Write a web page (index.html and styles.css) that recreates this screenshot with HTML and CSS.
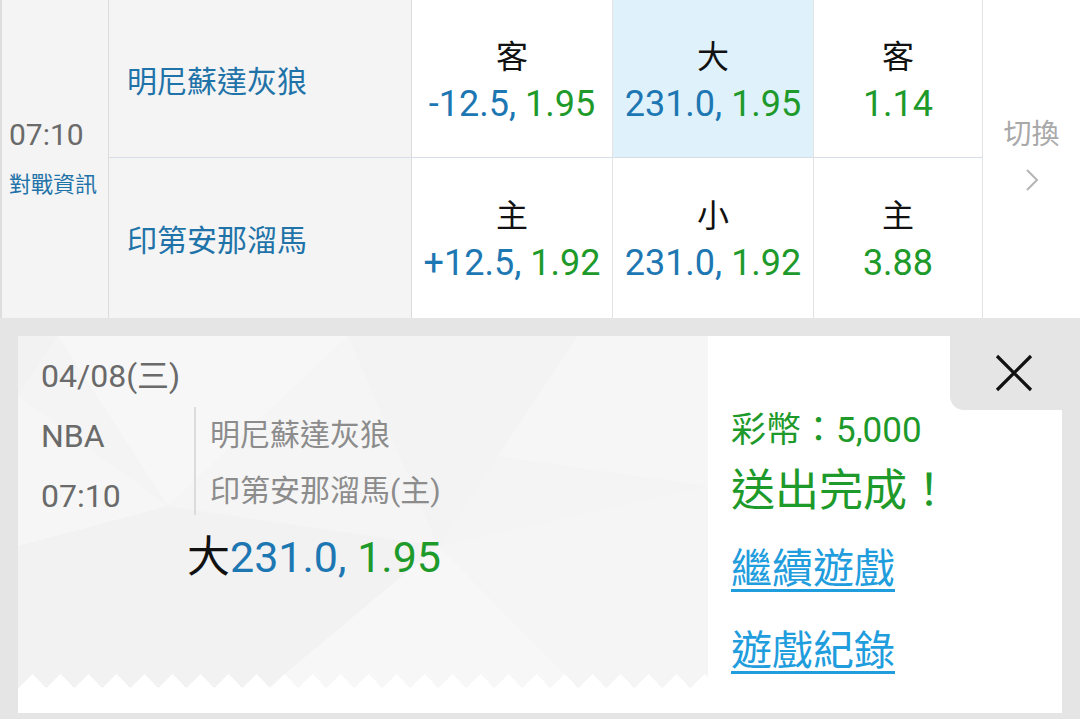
FILE: index.html
```html
<!DOCTYPE html>
<html lang="zh-Hant">
<head>
<meta charset="utf-8">
<title>投注</title>
<link rel="stylesheet" href="styles.css">
</head>
<body>
<div class="board">
  <div class="cell time-cell">
    <div class="time">07:10</div>
    <div class="info">對戰資訊</div>
  </div>
  <div class="cell team row1">明尼蘇達灰狼</div>
  <div class="cell odds row1">
    <div class="label">客</div>
    <div class="val"><span class="blue">-12.5,</span> <span class="green">1.95</span></div>
  </div>
  <div class="cell odds row1 selected">
    <div class="label">大</div>
    <div class="val"><span class="blue">231.0,</span> <span class="green">1.95</span></div>
  </div>
  <div class="cell odds row1">
    <div class="label">客</div>
    <div class="val"><span class="green">1.14</span></div>
  </div>
  <div class="cell switch-cell">
    <div class="switch">切換</div>
    <svg class="chev" width="14" height="24" viewBox="0 0 14 24"><polyline points="2,2 12,12 2,22" fill="none" stroke="#b5b5b5" stroke-width="2"/></svg>
  </div>
  <div class="cell team">印第安那溜馬</div>
  <div class="cell odds">
    <div class="label">主</div>
    <div class="val"><span class="blue">+12.5,</span> <span class="green">1.92</span></div>
  </div>
  <div class="cell odds">
    <div class="label">小</div>
    <div class="val"><span class="blue">231.0,</span> <span class="green">1.92</span></div>
  </div>
  <div class="cell odds">
    <div class="label">主</div>
    <div class="val"><span class="green">3.88</span></div>
  </div>
</div>

<div class="sheet">
  <div class="card">
    <div class="ticket">
      <svg class="facets" viewBox="0 0 690 352" preserveAspectRatio="none">
        <rect x="0" y="0" width="690" height="352" fill="#f4f4f4"/>
        <polygon points="40,0 330,0 150,170" fill="#f7f7f7"/>
        <polygon points="0,0 40,0 0,60" fill="#f2f2f2"/>
        <polygon points="330,0 560,0 420,210" fill="#f3f3f3"/>
        <polygon points="560,0 690,0 690,150 480,120" fill="#f6f6f6"/>
        <polygon points="150,170 420,210 250,352 0,352 0,210" fill="#f2f2f2"/>
        <polygon points="420,210 690,150 690,352 560,352" fill="#f5f5f5"/>
        <polygon points="250,352 420,210 560,352" fill="#f7f7f7"/>
        <polygon points="0,60 150,170 0,210" fill="#f6f6f6"/>
        <polygon points="330,0 420,210 150,170" fill="#f5f5f5"/>
      </svg>
      <div class="ticket-body">
        <div class="date">04/08(三)</div>
        <div class="match">
          <div class="meta">
            <div>NBA</div>
            <div>07:10</div>
          </div>
          <div class="teams">
            <div>明尼蘇達灰狼</div>
            <div>印第安那溜馬(主)</div>
          </div>
        </div>
        <div class="pick"><span class="dark">大</span><span class="blue">231.0,</span> <span class="green">1.95</span></div>
      </div>
      <div class="zigzag"></div>
    </div>
    <div class="panel">
      <div class="panel-head">
        <div class="close">
          <svg width="38" height="38" viewBox="0 0 38 38"><path d="M2 2 L36 36 M36 2 L2 36" stroke="#111" stroke-width="3.2" fill="none"/></svg>
        </div>
      </div>
      <div class="panel-body">
        <div class="coins">彩幣：5,000</div>
        <div class="done">送出完成！</div>
        <a class="link first">繼續遊戲</a>
        <a class="link second">遊戲紀錄</a>
      </div>
    </div>
  </div>
</div>
</body>
</html>
```
FILE: styles.css
```css
html, body {
  margin: 0;
  padding: 0;
  background: #e5e5e5;
  font-family: Roboto, "Noto Sans CJK TC", sans-serif;
}

.board {
  display: grid;
  grid-template-columns: 107px 303px 201px 201px 169px 1fr;
  grid-template-rows: 158px 160px;
  border-left: 2px solid #dedede;
  background: #fff;
}

.cell {
  box-sizing: border-box;
  border-right: 1px solid #e3e3e3;
}

.row1 {
  border-bottom: 1px solid #d5dee6;
}

.time-cell {
  grid-column: 1;
  grid-row: 1 / 3;
  background: #f4f4f4;
  border-right: 1px solid #dcdcdc;
  display: flex;
  flex-direction: column;
  justify-content: center;
  padding: 0 0 0 7px;
}

.time {
  font-size: 30px;
  color: #6a6a6a;
  line-height: 34px;
}

.info {
  font-size: 22px;
  color: #1f73a8;
  line-height: 30px;
  margin-top: 18px;
}

.team {
  background: #f4f4f4;
  border-right: 1px solid #dcdcdc;
  display: flex;
  align-items: center;
  padding-left: 18px;
  font-size: 30px;
  color: #1f73a8;
}

.odds {
  display: flex;
  flex-direction: column;
  align-items: center;
  justify-content: center;
  background: #fff;
  padding-top: 5px;
}

.odds.selected {
  background: #dff1fb;
}

.label {
  font-size: 32px;
  line-height: 40px;
  color: #111;
}

.val {
  font-size: 36px;
  line-height: 44px;
  margin-top: 5px;
  white-space: nowrap;
}

.blue { color: #1d77b2; }
.green { color: #1e9a2b; }
.dark { color: #111; }

.switch-cell {
  grid-column: 6;
  grid-row: 1 / 3;
  border-right: none;
  display: flex;
  flex-direction: column;
  align-items: center;
  justify-content: center;
  padding-bottom: 10px;
}

.switch {
  font-size: 28px;
  color: #a9a9a9;
  line-height: 36px;
}

.chev {
  margin-top: 15px;
}

.sheet {
  padding: 18px 18px 6px 18px;
}

.card {
  display: flex;
  height: 377px;
  background: #fff;
}

.ticket {
  position: relative;
  width: 690px;
  height: 352px;
}

.facets {
  position: absolute;
  left: 0;
  top: 0;
  width: 100%;
  height: 100%;
}

.ticket-body {
  position: relative;
  padding: 20px 0 0 23px;
}

.date {
  font-size: 32px;
  line-height: 40px;
  color: #6a6a6a;
}

.match {
  display: flex;
  margin-top: 12px;
}

.meta {
  width: 153px;
  font-size: 32px;
  color: #6a6a6a;
  line-height: 60px;
  margin-top: -2px;
}

.teams {
  border-left: 2px solid #dcdcdc;
  padding-left: 14px;
  font-size: 30px;
  color: #8c8c8c;
  line-height: 56px;
  height: 108px;
  margin-top: -1px;
}

.pick {
  font-size: 43px;
  line-height: 50px;
  margin: 6px 0 0 146px;
  white-space: nowrap;
}

.zigzag {
  position: absolute;
  left: 0;
  right: 0;
  bottom: 0;
  height: 14px;
  background: conic-gradient(from 135deg at 50% 0, #fff 90deg, transparent 0);
  background-size: 28px 14px;
  background-repeat: repeat-x;
}

.panel {
  flex: 1;
  display: flex;
  flex-direction: column;
}

.panel-head {
  display: flex;
  justify-content: flex-end;
}

.close {
  box-sizing: border-box;
  width: 112px;
  height: 74px;
  background: #e5e5e5;
  border-bottom-left-radius: 14px;
  display: flex;
  align-items: center;
  justify-content: center;
  padding-left: 16px;
}

.panel-body {
  display: flex;
  flex-direction: column;
  align-items: flex-start;
  padding-left: 23px;
}

.coins {
  font-size: 35px;
  line-height: 40px;
  color: #1e9a2b;
  margin-top: 1px;
}

.done {
  font-size: 44px;
  line-height: 56px;
  color: #1e9a2b;
  margin-top: 12px;
}

.link {
  font-size: 41px;
  line-height: 56px;
  color: #1f9ddd;
  text-decoration: underline;
  text-decoration-thickness: 3px;
  text-underline-offset: 6px;
}

.link.first {
  margin-top: 22px;
}

.link.second {
  margin-top: 26px;
}
```
